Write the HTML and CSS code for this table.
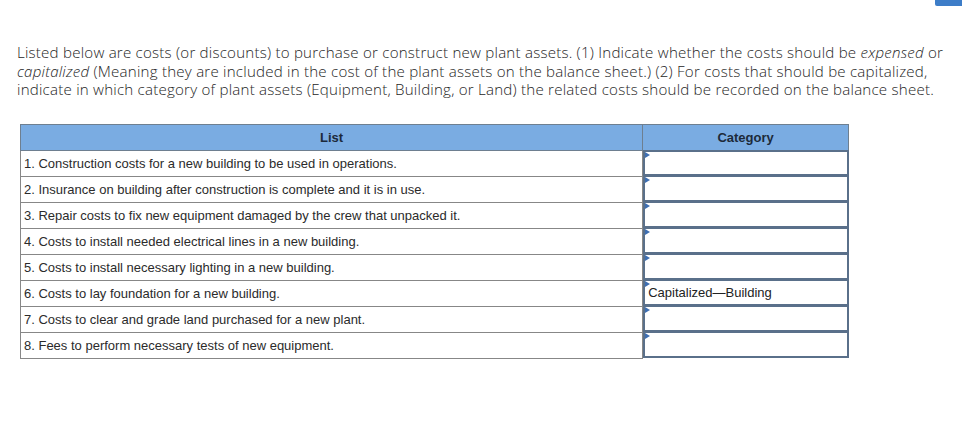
FILE: index.html
```html
<!DOCTYPE html>
<html lang="en">
<head>
<meta charset="utf-8">
<title>Plant assets</title>
<link rel="stylesheet" href="styles.css">
</head>
<body>
<div class="topbar"><span class="corner-btn"></span></div>
<p class="intro">Listed below are costs (or discounts) to purchase or construct new plant assets. (1) Indicate whether the costs should be <em>expensed</em> or<br><em>capitalized</em> (Meaning they are included in the cost of the plant assets on the balance sheet.) (2) For costs that should be capitalized,<br>indicate in which category of plant assets (Equipment, Building, or Land) the related costs should be recorded on the balance sheet.</p>
<table class="grid">
  <thead>
    <tr><th class="col-list">List</th><th class="col-cat">Category</th></tr>
  </thead>
  <tbody>
    <tr><td class="item">1. Construction costs for a new building to be used in operations.</td><td class="cat"><div class="select first"><span class="tri"></span></div></td></tr>
    <tr><td class="item">2. Insurance on building after construction is complete and it is in use.</td><td class="cat"><div class="select"><span class="tri"></span></div></td></tr>
    <tr><td class="item">3. Repair costs to fix new equipment damaged by the crew that unpacked it.</td><td class="cat"><div class="select"><span class="tri"></span></div></td></tr>
    <tr><td class="item">4. Costs to install needed electrical lines in a new building.</td><td class="cat"><div class="select"><span class="tri"></span></div></td></tr>
    <tr><td class="item">5. Costs to install necessary lighting in a new building.</td><td class="cat"><div class="select"><span class="tri"></span></div></td></tr>
    <tr><td class="item">6. Costs to lay foundation for a new building.</td><td class="cat"><div class="select"><span class="tri"></span><span class="val">Capitalized—Building</span></div></td></tr>
    <tr><td class="item">7. Costs to clear and grade land purchased for a new plant.</td><td class="cat"><div class="select"><span class="tri"></span></div></td></tr>
    <tr><td class="item">8. Fees to perform necessary tests of new equipment.</td><td class="cat"><div class="select last"><span class="tri"></span></div></td></tr>
  </tbody>
</table>
</body>
</html>
```

FILE: styles.css
```css
html, body {
  margin: 0;
  padding: 0;
  background: #ffffff;
}

body {
  font-family: "Open Sans", "Liberation Sans", sans-serif;
  color: #333333;
}

.topbar {
  display: flex;
  justify-content: flex-end;
  height: 6px;
}

.corner-btn {
  display: block;
  width: 27px;
  height: 6px;
  background: #3d7dc8;
  border-bottom-left-radius: 2px;
}

.intro {
  margin: 37px 0 0 17px;
  font-size: 15.1px;
  line-height: 18.5px;
  font-weight: 300;
  letter-spacing: 0.22px;
  color: #262626;
  white-space: nowrap;
}

.intro em {
  font-style: italic;
}

.grid {
  margin: 25px 0 0 20px;
  border-collapse: collapse;
  width: 829px;
  font-family: "Liberation Sans", Arial, sans-serif;
  font-size: 13px;
  color: #2b2b2b;
}

.grid th {
  background: #7aace2;
  height: 25px;
  padding: 0;
  font-size: 13px;
  font-weight: bold;
  color: #1c2a3a;
  border: 1px solid #6e7f90;
  text-align: center;
}

.col-list {
  width: 622px;
}

.col-cat {
  width: 205px;
}

.grid td {
  padding: 0;
  height: 25px;
  border: 1px solid #878787;
}

.grid td.item {
  padding-left: 3px;
}

.grid td.cat {
  border: none;
  border-left: 1px solid #878787;
  vertical-align: top;
}

.select {
  position: relative;
  box-sizing: border-box;
  height: 26px;
  border: 2px solid #5a708a;
  border-top-width: 1px;
  margin-bottom: -1px;
  padding: 4px 0 0 3px;
  background: #ffffff;
}

.select.first {
  border-top-width: 2px;
  margin-top: -1px;
}

.tri {
  position: absolute;
  left: 0;
  top: 0;
  width: 0;
  height: 0;
  border-top: 3px solid transparent;
  border-bottom: 3px solid transparent;
  border-left: 5px solid #3e6fb2;
}

.val {
  display: block;
  font-size: 13px;
  line-height: 16px;
  color: #222222;
}
```
